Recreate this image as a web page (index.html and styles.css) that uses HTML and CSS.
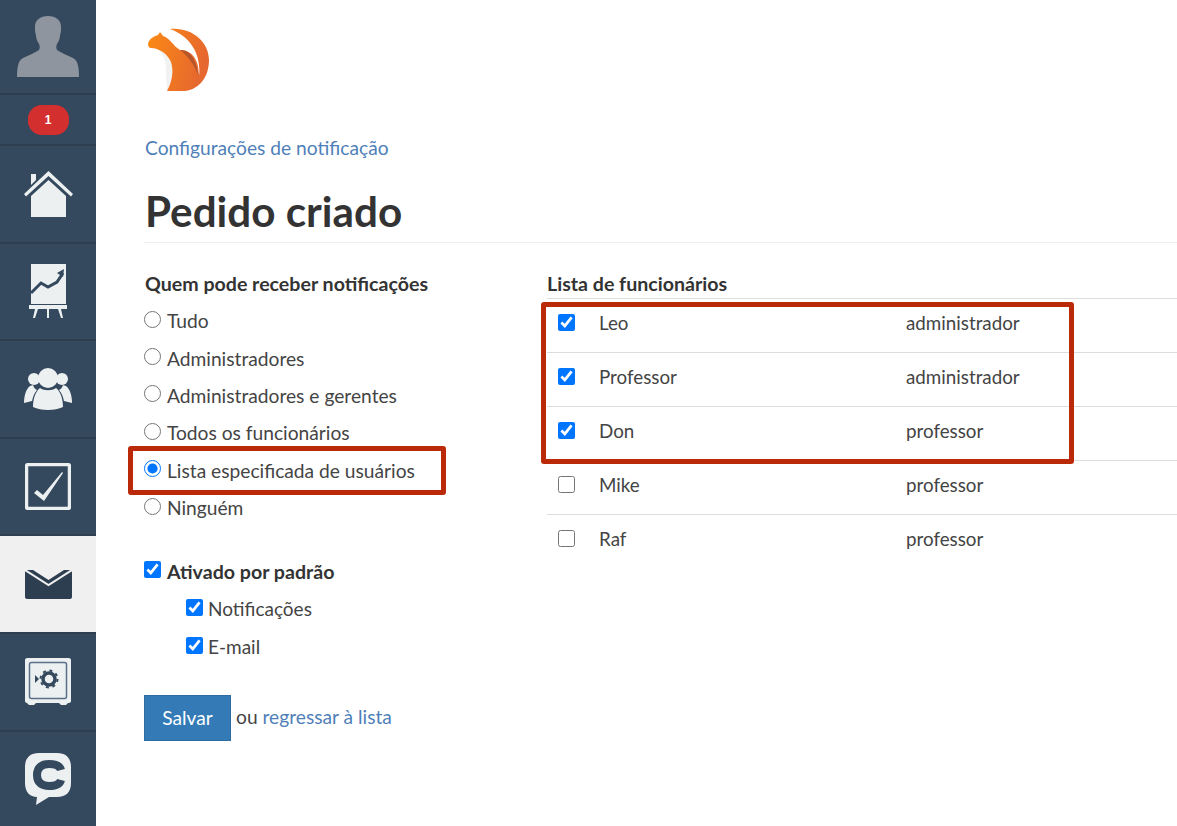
FILE: index.html
```html
<!DOCTYPE html>
<html lang="pt">
<head>
  <meta charset="UTF-8">
  <title>Pedido criado</title>
  <link rel="stylesheet" href="styles.css">
</head>
<body>
  <nav class="sidebar">
    <div class="nav-item nav-avatar">
      <svg width="62" height="61" viewBox="0 0 62 61"><path fill="#8e959f" d="M31 0c8 0 13 4 13 11 0 3 0 6-1 8 0 3-1 6-3 9-1 2-1 4 0 6 4 3 10 5 16 8 4 2 6 7 6 19H0c0-12 2-17 6-19 6-3 12-5 16-8 1-2 1-4 0-6-2-3-3-6-3-9-1-2-1-5-1-8C18 4 23 0 31 0z"/></svg>
    </div>
    <div class="nav-item nav-count"><span class="badge">1</span></div>
    <div class="nav-item nav-home">
      <svg width="49" height="47" viewBox="0 0 49 47"><g fill="#ecf0f1"><path d="M7 3h5v6l-5 5z"/><path d="M24.500 0 49 23l-2 2.500L24.500 5 2 25.500 0 23z"/><path d="M24.500 9 42 25v21H7V25z"/></g></svg>
    </div>
    <div class="nav-item">
      <svg width="38" height="54" viewBox="0 0 38 54"><path fill="#ecf0f1" d="M2 0h35v40H2z"/><path fill="none" stroke="#34495e" stroke-width="3" d="M2 29l10-10 7 4 9-5 6-9"/><path fill="#34495e" d="M35 5l-1 8-6-4z"/><path fill="#ecf0f1" d="M0 41h38v4H0zM6 45h3l-3 9H4zM18 45h2v9h-2zM29 45h3l2 9h-2z"/></svg>
    </div>
    <div class="nav-item">
      <svg width="48" height="42" viewBox="0 0 48 42"><g fill="#ecf0f1"><circle cx="10" cy="11" r="6"/><circle cx="38" cy="11" r="6"/><path d="M6 18l3-1c1 3 2 4 4 5-3 3-4 7-5 11l-8 2c0-7 2-14 6-17zM42 18l-3-1c-1 3-2 4-4 5 3 3 4 7 5 11l8 2c0-7-2-14-6-17z"/><circle cx="24" cy="10" r="10"/><path d="M16 20c4 3 12 3 16 0 4 3 7 10 7 19-8 4-22 4-30 0 0-9 3-16 7-19z"/></g></svg>
    </div>
    <div class="nav-item">
      <svg width="46" height="47" viewBox="0 0 46 47"><rect x="1.500" y="1.500" width="43" height="44" rx="2" fill="none" stroke="#ecf0f1" stroke-width="3.500"/><path fill="#ecf0f1" d="M9 30l3-3 6 5L37 9l1 1-19 28z"/></svg>
    </div>
    <div class="nav-item nav-active">
      <svg width="47" height="29" viewBox="0 0 47 29"><path fill="#2c3e50" d="M2 0h6l15.500 10L39 0h6c1 0 2 1 2 2v25c0 1-1 2-2 2H2c-1 0-2-1-2-2V2C0 1 1 0 2 0z"/><path fill="none" stroke="#f0f0f0" stroke-width="2" d="M0 0l23.500 15L47 0"/></svg>
    </div>
    <div class="nav-item">
      <svg width="46" height="47" viewBox="0 0 46 47"><path fill="#ecf0f1" d="M2 0h42c1 0 2 1 2 2v41c0 1-1 2-2 2h-1l-2 2h-5l-2-2H11l-2 2H4l-2-2c-1 0-2-1-2-2V2C0 1 1 0 2 0z"/><rect x="4.500" y="4.500" width="37" height="36" rx="2" fill="none" stroke="#5b7087" stroke-width="1.500"/><circle cx="24" cy="21" r="6" fill="none" stroke="#34495e" stroke-width="3.500"/><circle cx="24" cy="21" r="8.500" fill="none" stroke="#34495e" stroke-width="2" stroke-dasharray="3 3.700"/><path fill="#34495e" d="M10 17l4 4-4 4z"/></svg>
    </div>
    <div class="nav-item nav-last">
      <svg width="46" height="52" viewBox="0 0 46 52"><path fill="#ecf0f1" d="M14 0h18c9 0 14 5 14 14v16c0 9-5 14-14 14h-8l-13 8 1-8c-7 0-12-5-12-14V14C0 5 5 0 14 0z"/><path fill="none" stroke="#34495e" stroke-width="8" d="M36 17c-1-4-6-6-12-6-7 0-12 3-12 11s5 11 12 11c6 0 11-2 12-6"/></svg>
    </div>
  </nav>

  <main class="content">
    <svg class="logo" width="63" height="64" viewBox="147 28 63 64">
      <defs>
        <linearGradient id="logoFill" x1="0" y1="0" x2="1" y2="0.300">
          <stop offset="0" stop-color="#fb8a14"/>
          <stop offset="1" stop-color="#e6672f"/>
        </linearGradient>
      </defs>
      <path fill="#f1f3f3" d="M158 49C164 54 167 64 166 78 167 86 167 90 167 91 173 80 174 68 170 60 167 54 163 51 158 49Z"/>
      <path fill="url(#logoFill)" d="M148 44C149 38 155 36 158 35L160 32 163 36C170 38 173 46 180 50 188 50 195 54 198 66L199 76C201 60 195 38 170 29 192 27 209 42 209 60 209 78 198 92 180 91L167 91C173 80 174 68 170 60 165 51 156 48 151 48 149 48 148 46 148 44Z"/>
      <path fill="#b5562a" d="M180 50C188 50 195 54 199 77 194 64 188 56 180 50Z"/>
    </svg>
    <a class="crumb" href="#">Configurações de notificação</a>
    <h1>Pedido criado</h1>

    <div class="columns">
      <section class="col-left">
        <h2>Quem pode receber notificações</h2>
        <label class="opt"><input type="radio" name="who">Tudo</label>
        <label class="opt"><input type="radio" name="who">Administradores</label>
        <label class="opt"><input type="radio" name="who">Administradores e gerentes</label>
        <label class="opt"><input type="radio" name="who">Todos os funcionários</label>
        <label class="opt"><input type="radio" name="who" checked>Lista especificada de usuários</label>
        <label class="opt"><input type="radio" name="who">Ninguém</label>

        <label class="opt opt-main"><input type="checkbox" checked>Ativado por padrão</label>
        <label class="opt opt-sub"><input type="checkbox" checked>Notificações</label>
        <label class="opt opt-sub"><input type="checkbox" checked>E-mail</label>

        <div class="actions">
          <button class="btn" type="button">Salvar</button>
          <span class="actions-text">ou <a href="#">regressar à lista</a></span>
        </div>
      </section>

      <section class="col-right">
        <h2>Lista de funcionários</h2>
        <div class="staff">
          <div class="staff-row"><input type="checkbox" checked><span class="staff-name">Leo</span><span>administrador</span></div>
          <div class="staff-row"><input type="checkbox" checked><span class="staff-name">Professor</span><span>administrador</span></div>
          <div class="staff-row"><input type="checkbox" checked><span class="staff-name">Don</span><span>professor</span></div>
          <div class="staff-row"><input type="checkbox"><span class="staff-name">Mike</span><span>professor</span></div>
          <div class="staff-row"><input type="checkbox"><span class="staff-name">Raf</span><span>professor</span></div>
        </div>
      </section>
    </div>

    <div class="mark mark-radio"></div>
    <div class="mark mark-staff"></div>
  </main>
</body>
</html>
```

FILE: styles.css
```css
html, body {
  margin: 0;
  height: 100%;
  overflow: hidden;
}

body {
  display: flex;
  background: #fff;
  font-family: Lato, "Open Sans", Arial, sans-serif;
  font-size: 19.200px;
  color: #444;
}

a {
  color: #4f7fb8;
  text-decoration: none;
}

/* sidebar */
.sidebar {
  width: 96px;
  height: 826px;
  flex: none;
  display: flex;
  flex-direction: column;
  background: #34495e;
}

.nav-item {
  height: 95.500px;
  flex: none;
  display: flex;
  align-items: center;
  justify-content: center;
  border-bottom: 2px solid #2c3e50;
}

.nav-avatar {
  height: 93px;
}

.nav-count {
  height: 49px;
}

.nav-home svg {
  margin-top: 2px;
}

.nav-active {
  height: 96px;
  background: #f0f0f0;
}

.nav-last {
  border-bottom: 0;
}

.badge {
  width: 41px;
  height: 30px;
  border-radius: 14px;
  display: flex;
  align-items: center;
  justify-content: center;
  background: #d32f2f;
  color: #fff;
  font-family: "Liberation Sans", Arial, sans-serif;
  font-size: 12px;
  font-weight: bold;
}

/* main */
.content {
  position: relative;
  flex: 1;
  padding: 28px 0 0 48px;
}

.logo {
  display: block;
  margin-left: 3px;
}

.crumb {
  display: block;
  margin: 42px 0 0 1px;
  line-height: 28px;
}

h1 {
  margin: 22px 0 0;
  padding: 0 0 4px 1px;
  border-bottom: 1px solid #eee;
  font-size: 42.200px;
  line-height: 54px;
  font-weight: 700;
  color: #333;
}

h2 {
  margin: 0;
  font-size: 19.600px;
  line-height: 24px;
  font-weight: 700;
  color: #333;
}

.columns {
  display: flex;
  margin-top: 29px;
}

.col-left {
  width: 403px;
  flex: none;
  padding-left: 1px;
  box-sizing: border-box;
}

.col-right {
  flex: 1;
}

.opt {
  display: flex;
  align-items: center;
  height: 37.400px;
  margin: 0 0 0 -1px;
}

.col-left h2 {
  margin-bottom: 6px;
}

.opt input {
  width: 17px;
  height: 17px;
  margin: -3px 6px 0 0;
}

.opt-main {
  margin-top: 26px;
  font-size: 19.600px;
  font-weight: 700;
  color: #333;
}

.opt-sub {
  height: 38px;
  padding-left: 42px;
  font-size: 19px;
}

.opt-sub input {
  margin-right: 5px;
}

.actions {
  display: flex;
  align-items: center;
  gap: 5px;
  margin: 29px 0 0 -1px;
}

.actions-text {
  margin-top: -2px;
}

.btn {
  width: 87px;
  height: 46px;
  padding: 0;
  border: 1px solid #2e6da4;
  background: #337ab7;
  color: #fff;
  font: inherit;
}

.staff {
  margin-top: 2px;
  border-top: 1px solid #ddd;
}

.staff-row {
  display: flex;
  align-items: center;
  height: 47px;
  padding: 0 0 6px 11px;
  border-bottom: 1px solid #ddd;
  font-size: 18.800px;
}

.staff-row:last-child {
  border-bottom: 0;
}

.staff-row input {
  width: 17px;
  height: 17px;
  margin: 0 24px 0 0;
}

.staff-name {
  width: 307px;
}

/* red annotation frames drawn over the form */
.mark {
  position: absolute;
  box-sizing: border-box;
  border: 5px solid #bb2a08;
  border-radius: 3px;
}

.mark-radio {
  left: 32px;
  top: 446px;
  width: 318px;
  height: 49px;
}

.mark-staff {
  left: 445px;
  top: 302px;
  width: 533px;
  height: 162px;
}
```
